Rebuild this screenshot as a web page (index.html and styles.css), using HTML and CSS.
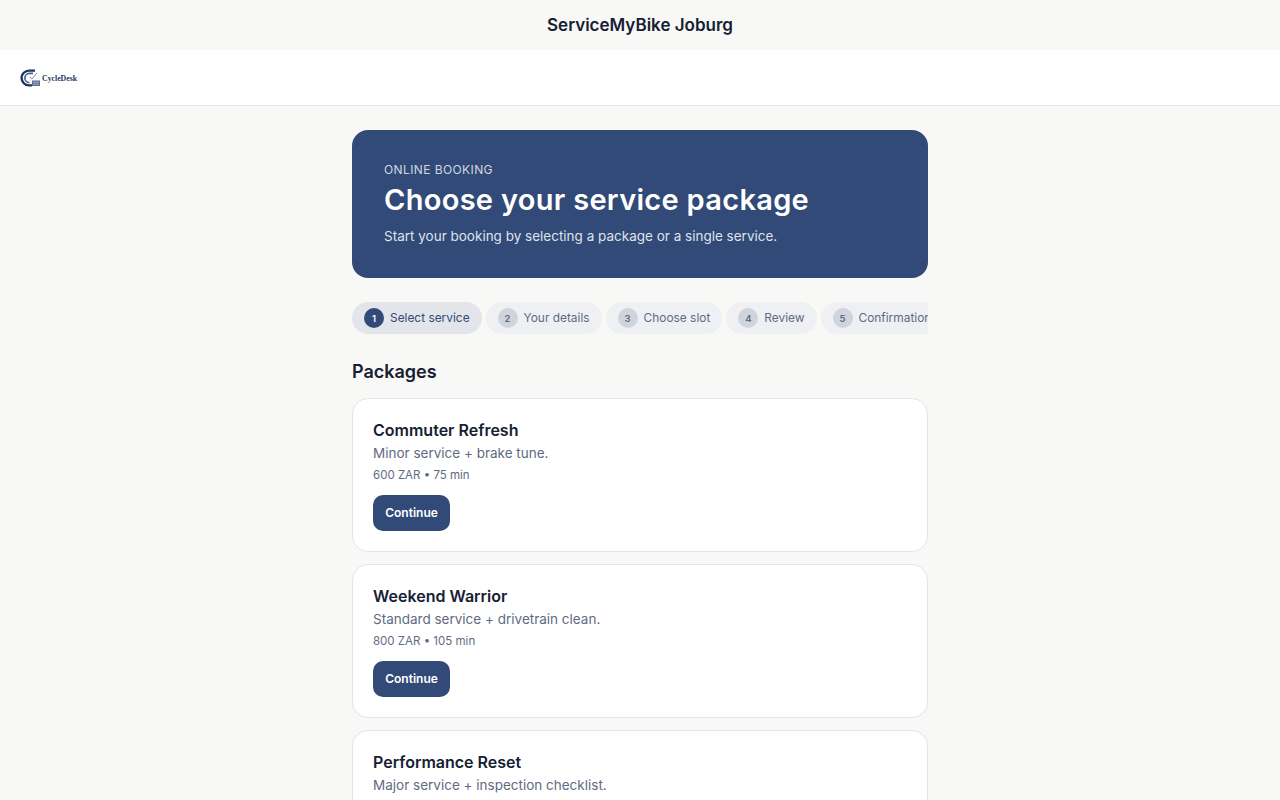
FILE: index.html
```html
<!DOCTYPE html>
<html lang="en">

<head>
    <meta charset="UTF-8">
    <meta name="viewport" content="width=device-width, initial-scale=1.0">
    <title>ServiceMyBike Joburg</title>
    <link rel="stylesheet" href="styles.css">
</head>

<body>
    <header class="site-title">ServiceMyBike Joburg</header>

    <nav class="topbar">
        <div class="logo">
            <svg class="logo-mark" width="22" height="18" viewBox="0 0 22 18" fill="none">
                <path d="M15 1.6H9A7.4 7.4 0 0 0 9 16.4H12" stroke="#1f3560" stroke-width="2.4"/>
                <path d="M13 4.4H9.4A4.6 4.6 0 0 0 9.4 13.6" stroke="#44608f" stroke-width="1.6"/>
                <path d="M10 8l2 2 5-6" stroke="#7f8fa9" stroke-width="1"/>
                <rect x="12" y="11.5" width="8" height="5.5" fill="#566d96"/>
                <path d="M13 13.2h6M13 15.2h6" stroke="#c3ccdb" stroke-width="0.7"/>
            </svg>
            <span class="logo-text">CycleDesk</span>
        </div>
    </nav>

    <main class="page">
        <section class="hero">
            <p class="eyebrow">Online booking</p>
            <h1>Choose your service package</h1>
            <p class="hero-sub">Start your booking by selecting a package or a single service.</p>
        </section>

        <ol class="steps">
            <li class="step active"><span class="step-num">1</span>Select service</li>
            <li class="step"><span class="step-num">2</span>Your details</li>
            <li class="step"><span class="step-num">3</span>Choose slot</li>
            <li class="step"><span class="step-num">4</span>Review</li>
            <li class="step"><span class="step-num">5</span>Confirmation</li>
        </ol>

        <h2>Packages</h2>

        <div class="card">
            <h3>Commuter Refresh</h3>
            <p class="card-desc">Minor service + brake tune.</p>
            <p class="card-meta">600 ZAR • 75 min</p>
            <button class="btn">Continue</button>
        </div>

        <div class="card">
            <h3>Weekend Warrior</h3>
            <p class="card-desc">Standard service + drivetrain clean.</p>
            <p class="card-meta">800 ZAR • 105 min</p>
            <button class="btn">Continue</button>
        </div>

        <div class="card">
            <h3>Performance Reset</h3>
            <p class="card-desc">Major service + inspection checklist.</p>
            <p class="card-meta">1200 ZAR • 150 min</p>
            <button class="btn">Continue</button>
        </div>
    </main>
</body>

</html>
```

FILE: styles.css
```css
* {
    margin: 0;
    padding: 0;
    box-sizing: border-box;
}

html,
body {
    height: 800px;
    overflow: hidden;
}

body {
    font-family: "Inter", "Noto Sans", sans-serif;
    background: #f8f8f6;
    color: #162033;
}

.site-title {
    height: 50px;
    display: flex;
    justify-content: center;
    align-items: center;
    font-size: 17px;
    font-weight: 600;
}

.topbar {
    height: 56px;
    background: #ffffff;
    border-bottom: 1px solid #e3e5e8;
    display: flex;
    align-items: center;
    padding-left: 20px;
}

.logo {
    display: flex;
    align-items: center;
}

.logo-text {
    font-family: "Liberation Serif", serif;
    font-size: 7.8px;
    font-weight: 700;
    color: #1f3560;
    margin-top: 2px;
}

.page {
    width: 576px;
    margin: 0 auto;
    padding-top: 24px;
}

.hero {
    height: 148px;
    padding: 32px;
    background: #324a77;
    border-radius: 16px;
    color: #ffffff;
}

.eyebrow {
    font-size: 12px;
    line-height: 16px;
    letter-spacing: 0.4px;
    text-transform: uppercase;
    color: #d0d6e1;
}

.hero h1 {
    margin-top: 3px;
    font-size: 29px;
    line-height: 38px;
    font-weight: 600;
    letter-spacing: 0.3px;
}

.hero-sub {
    margin-top: 7px;
    font-size: 13.5px;
    line-height: 20px;
    color: #dfe3ea;
}

.steps {
    display: flex;
    gap: 4px;
    margin-top: 24px;
    list-style: none;
    overflow: hidden;
}

.step {
    flex-shrink: 0;
    height: 32px;
    display: flex;
    align-items: center;
    gap: 6px;
    padding: 0 12px 1px;
    border-radius: 16px;
    background: #eff0f3;
    font-size: 11.9px;
    color: #5f6b82;
}

.step.active {
    background: #e3e5ea;
    color: #324a77;
}

.step-num {
    width: 20px;
    height: 20px;
    margin-top: 1px;
    border-radius: 50%;
    display: flex;
    justify-content: center;
    align-items: center;
    background: #d0d4dc;
    font-size: 9.5px;
    font-weight: 600;
}

.active .step-num {
    background: #324a77;
    color: #ffffff;
}

h2 {
    margin: 26px 0 14px;
    font-size: 18px;
    line-height: 24px;
    font-weight: 600;
}

.card {
    height: 154px;
    margin-bottom: 12px;
    padding: 20px;
    background: #ffffff;
    border: 1px solid #e3e5e8;
    border-radius: 16px;
}

.card h3 {
    font-size: 16px;
    line-height: 22px;
    font-weight: 600;
}

.card-desc {
    margin-top: 2px;
    font-size: 13.5px;
    line-height: 20px;
    color: #5f6b82;
}

.card-meta {
    margin-top: 3px;
    font-size: 11.5px;
    line-height: 18px;
    color: #5f6b82;
}

.btn {
    display: block;
    width: 77px;
    height: 36px;
    margin-top: 11px;
    padding-bottom: 2px;
    border: none;
    border-radius: 10px;
    background: #324a77;
    color: #ffffff;
    font-family: inherit;
    font-size: 12px;
    font-weight: 600;
}
```
